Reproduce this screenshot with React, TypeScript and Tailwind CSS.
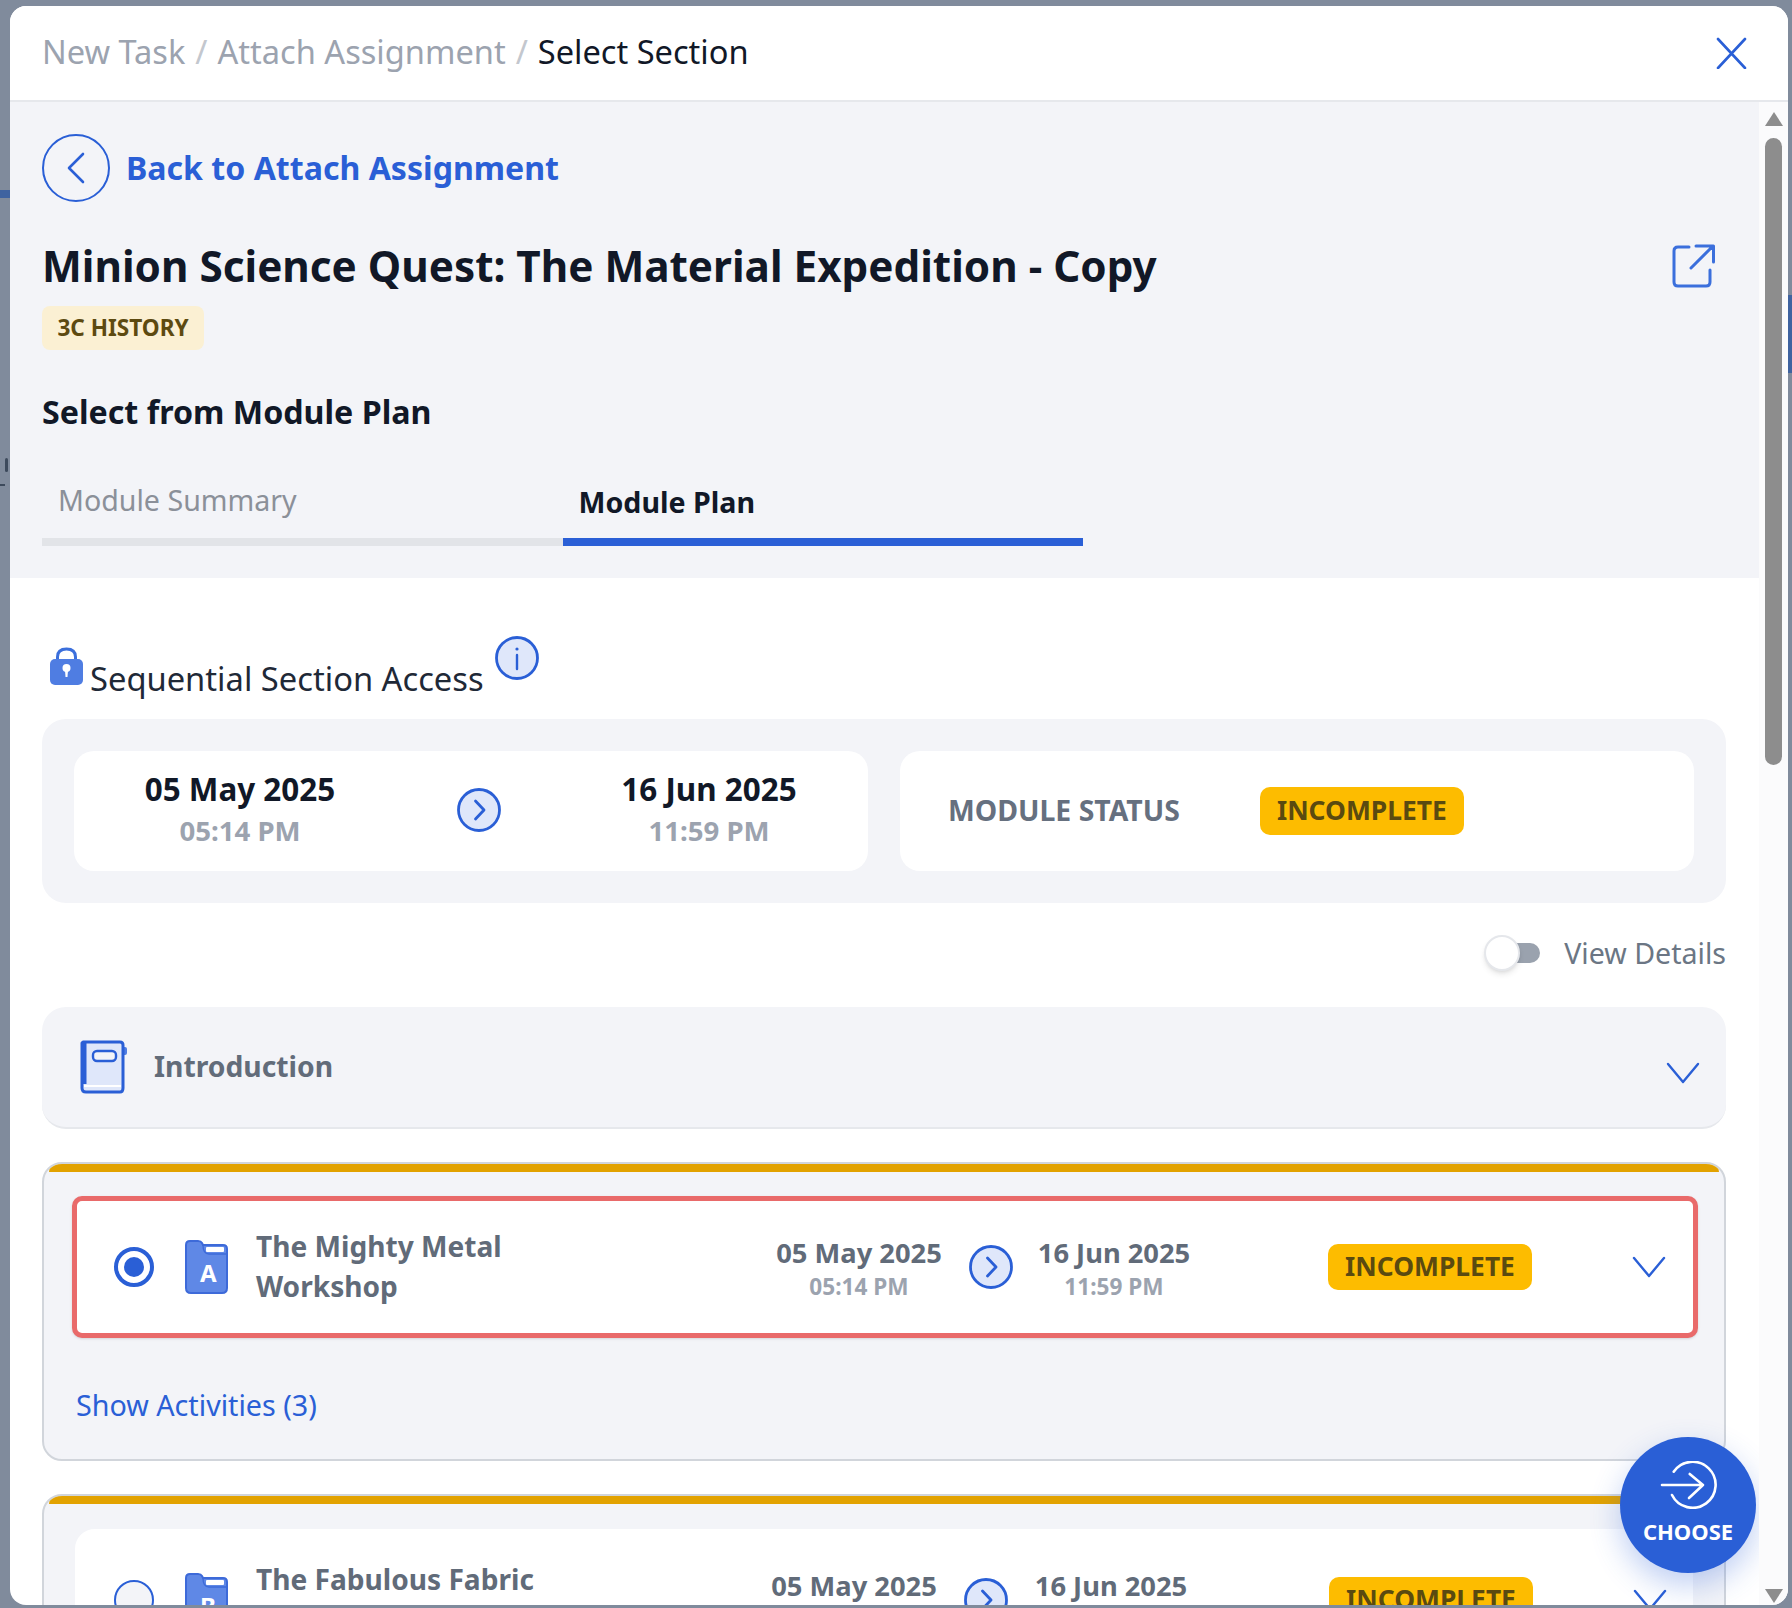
import React from "react";

function Chevron() {
  return (
    <svg width="34" height="22" viewBox="0 0 34 22" fill="none" stroke="#2a5fd6" strokeWidth="2.4" strokeLinecap="round" strokeLinejoin="round">
      <path d="M2 2 L17 20 L32 2" />
    </svg>
  );
}

function ArrowCircle() {
  return (
    <svg width="44" height="44" viewBox="0 0 44 44" fill="none" className="shrink-0">
      <circle cx="22" cy="22" r="20.5" fill="#dfe7fa" stroke="#2a5fd6" strokeWidth="2.8" />
      <path d="M18.5 13 L27 22 L18.5 31" stroke="#2a5fd6" strokeWidth="2.8" strokeLinecap="round" strokeLinejoin="round" />
    </svg>
  );
}

function FolderIcon({ letter }: { letter: string }) {
  return (
    <div className="relative h-[54px] w-[43px] shrink-0">
      <svg width="43" height="54" viewBox="0 0 43 54" fill="none" className="absolute inset-0">
        <path
          d="M1 5 Q1 1 5 1 H13 Q16 1 17 3 L18 5 H38 Q42 5 42 9 V48 Q42 53 37 53 H6 Q1 53 1 48 Z"
          fill="#5f88e6"
          stroke="#3d6ad9"
          strokeWidth="2"
        />
        <rect x="21" y="7" width="18" height="5" rx="1" fill="#ffffff" />
        <path d="M18 5 Q18 14 24 14 H41" fill="none" stroke="#3d6ad9" strokeWidth="1.4" />
      </svg>
      <span className="absolute left-[15px] top-[19px] text-[24px] leading-[28px] font-bold text-white">{letter}</span>
    </div>
  );
}

function Status() {
  return (
    <div className="flex h-[46px] w-[204px] shrink-0 items-center justify-center rounded-[10px] bg-[#fdbc00] pb-[1px] text-[26.4px] font-bold text-[#5a4a10]">
      INCOMPLETE
    </div>
  );
}

function Row({
  lines,
  letter,
  selected,
}: {
  lines: string[];
  letter: string;
  selected: boolean;
}) {
  return (
    <div
      className={
        selected
          ? "flex h-[142px] items-center rounded-[10px] border-[5px] border-[#e96a6a] bg-white pl-[37px] shadow-sm"
          : "ml-[3px] mr-[5px] flex h-[142px] items-center rounded-[20px] border-[5px] border-white bg-white pl-[34px]"
      }
    >
      {selected ? (
        <div className="flex h-[40px] w-[40px] shrink-0 items-center justify-center rounded-full border-[4px] border-[#2a5fd6] bg-white">
          <div className="h-[20px] w-[20px] rounded-full bg-[#2a5fd6]" />
        </div>
      ) : (
        <div className="h-[40px] w-[40px] shrink-0 rounded-full border-[2px] border-[#2a5fd6] bg-[#f3f4f8]" />
      )}
      <div className="ml-[31px]">
        <FolderIcon letter={letter} />
      </div>
      <div className="ml-[28px] h-[82px] w-[400px] shrink-0 pb-[2px] text-[28.1px] leading-[40px] font-bold text-[#616b79]">
        {lines.map((t) => (
          <div key={t}>{t}</div>
        ))}
      </div>
      <div className={selected ? "ml-[113px] flex w-[180px] shrink-0 flex-col items-center" : "ml-[108px] flex w-[180px] shrink-0 flex-col items-center"}>
        <div className="text-[27.3px] leading-[39px] font-bold text-[#616b79]">05 May 2025</div>
        <div className="text-[22.6px] leading-[29px] font-bold text-[#9ca3af]">05:14 PM</div>
      </div>
      <div className="ml-[20px]">
        <ArrowCircle />
      </div>
      <div className={selected ? "ml-[14px] flex w-[174px] shrink-0 flex-col items-center" : "ml-[16px] flex w-[174px] shrink-0 flex-col items-center"}>
        <div className="text-[27.3px] leading-[39px] font-bold text-[#616b79]">16 Jun 2025</div>
        <div className="text-[22.6px] leading-[29px] font-bold text-[#9ca3af]">11:59 PM</div>
      </div>
      <div className={selected ? "ml-[127px]" : "ml-[131px]"}>
        <Status />
      </div>
      <div className="ml-[100px]">
        <Chevron />
      </div>
    </div>
  );
}

export default function App() {
  return (
    <div className="relative h-[1608px] w-[1792px] overflow-hidden bg-[#808b9c] pl-[10px] pr-[4px] pt-[6px] pb-[3px] font-['Noto_Sans',sans-serif]">
      {/* Page showing behind the dialog */}
      <div className="absolute left-0 top-[190px] h-[8px] w-[10px] bg-[#3f63a0]" />
      <div className="absolute left-[5px] top-[458px] h-[14px] w-[3px] rounded-full bg-[#3d4a5c]" />
      <div className="absolute left-0 top-[484px] h-[2px] w-[5px] bg-[#3d4a5c]" />
      <div className="absolute right-0 top-[295px] h-[78px] w-[4px] bg-[#3f63a0]" />

      <div className="relative flex h-full flex-col overflow-hidden rounded-[16px] bg-white">
        {/* Header */}
        <div className="flex h-[96px] shrink-0 items-center justify-between border-b-2 border-[#e6e8ec] bg-white pl-[32px] pr-[41px]">
          <div className="pb-[2px] text-[32.6px] leading-[44px] text-[#111827]">
            <span className="text-[#9ca3af]">New Task</span>
            <span className="mx-[10px] text-[#c3c7ce]">/</span>
            <span className="text-[#9ca3af]">Attach Assignment</span>
            <span className="mx-[10px] text-[#c3c7ce]">/</span>
            <span>Select Section</span>
          </div>
          <svg width="32" height="32" viewBox="0 0 32 32" fill="none" stroke="#2a5fd6" strokeWidth="2.6" strokeLinecap="round">
            <path d="M3 2 L30 31 M30 2 L3 31" />
          </svg>
        </div>

        <div className="flex min-h-0 flex-1">
          {/* Main */}
          <div className="relative min-w-0 flex-1 overflow-hidden">
            <div className="h-[476px] bg-[#f3f4f8] pl-[32px] pr-[33px] pt-[32px]">
              <div className="flex items-center">
                <div className="flex h-[68px] w-[68px] items-center justify-center rounded-full border-2 border-[#2a5fd6]">
                  <svg width="20" height="32" viewBox="0 0 20 32" fill="none" stroke="#2a5fd6" strokeWidth="2.6" strokeLinecap="round" strokeLinejoin="round">
                    <path d="M17 2 L3 16 L17 30" />
                  </svg>
                </div>
                <div className="ml-[16px] text-[32.1px] leading-[44px] font-bold text-[#2a5fd6]">Back to Attach Assignment</div>
              </div>
              <div className="mt-[32px] flex items-center justify-between pr-[10px]">
                <div className="text-[42.25px] leading-[64px] font-bold text-[#111827]">Minion Science Quest: The Material Expedition - Copy</div>
                <svg width="44" height="44" viewBox="0 0 44 44" fill="none" stroke="#3b6fdc" strokeWidth="3" strokeLinecap="round" strokeLinejoin="round">
                  <path d="M17 3 H6 Q2 3 2 7 V38 Q2 42 6 42 H34 Q38 42 38 38 V26" />
                  <path d="M19 24 L41 2 M24 2 H41.5 V18" />
                </svg>
              </div>
              <div className="mt-[8px] flex h-[44px] w-[162px] items-center justify-center rounded-[8px] bg-[#fbf0d3] text-[22.6px] font-bold text-[#5d4a10]">
                3C HISTORY
              </div>
              <div className="mt-[40px] text-[32.2px] leading-[44px] font-bold text-[#111827]">Select from Module Plan</div>
              <div className="mt-[21px] flex w-[1041px]">
                <div className="flex h-[91px] flex-1 flex-col justify-between">
                  <div className="pl-[16px] pt-[25px] text-[28.6px] leading-[40px] text-[#8b9099]">Module Summary</div>
                  <div className="h-[8px] bg-[#e2e4e8]" />
                </div>
                <div className="flex h-[91px] flex-1 flex-col justify-between">
                  <div className="pl-[16px] pt-[27px] text-[28.6px] leading-[40px] font-bold text-[#111827]">Module Plan</div>
                  <div className="h-[8px] bg-[#2a5fd6]" />
                </div>
              </div>
            </div>

            <div className="pl-[32px] pr-[33px]">
              {/* Sequential */}
              <div className="flex h-[141px] items-end pb-[18px]">
                <div className="flex w-full items-end">
                  <svg width="35" height="38" viewBox="0 0 35 38" fill="none" className="mb-[16px] ml-[7px] shrink-0">
                    <path d="M8.5 14 V10 Q8.5 2 17.5 2 Q26.5 2 26.5 10 V14" stroke="#3b6fdc" strokeWidth="3" />
                    <rect x="1" y="12" width="33" height="26" rx="5" fill="#4f7de2" />
                    <circle cx="17.5" cy="21" r="4" fill="#fff" />
                    <path d="M16 23 H19 L18.5 30 H16.5 Z" fill="#fff" />
                  </svg>
                  <div className="ml-[6px] text-[32.7px] leading-[44px] text-[#1f2937]">Sequential Section Access</div>
                  <svg width="44" height="44" viewBox="0 0 44 44" fill="none" className="mb-[21px] ml-[11px] shrink-0">
                    <circle cx="22" cy="22" r="20.5" fill="#dfe7fa" stroke="#2a5fd6" strokeWidth="2.8" />
                    <path d="M22 19 V33" stroke="#2a5fd6" strokeWidth="2.4" strokeLinecap="round" />
                    <circle cx="22" cy="13" r="1.6" fill="#2a5fd6" />
                  </svg>
                </div>
              </div>

              {/* Summary */}
              <div className="grid h-[184px] grid-cols-2 gap-[32px] rounded-[24px] bg-[#f3f4f8] p-[32px]">
                <div className="grid h-[120px] grid-cols-[332px_146px_1fr] items-center rounded-[20px] bg-white">
                  <div className="flex flex-col items-center pb-[8px]">
                    <div className="text-[31.4px] leading-[45px] font-bold text-[#111827]">05 May 2025</div>
                    <div className="text-[27.6px] leading-[38px] font-bold text-[#9ca3af]">05:14 PM</div>
                  </div>
                  <div className="flex justify-center pb-[2px]">
                    <ArrowCircle />
                  </div>
                  <div className="flex flex-col items-center pb-[8px] pr-[2px]">
                    <div className="text-[31.4px] leading-[45px] font-bold text-[#111827]">16 Jun 2025</div>
                    <div className="text-[27.6px] leading-[38px] font-bold text-[#9ca3af]">11:59 PM</div>
                  </div>
                </div>
                <div className="flex h-[120px] items-center rounded-[20px] bg-white pl-[48px]">
                  <div className="pb-[2px] text-[28.4px] font-bold text-[#66707f]">MODULE STATUS</div>
                  <div className="ml-[80px] flex h-[48px] w-[204px] items-center justify-center rounded-[10px] bg-[#fdbc00] text-[26.4px] font-bold text-[#5a4a10]">
                    INCOMPLETE
                  </div>
                </div>
              </div>

              {/* View details */}
              <div className="flex h-[104px] items-center justify-end pb-[4px]">
                <div className="relative h-[36px] w-[56px]">
                  <div className="absolute right-0 top-[8px] h-[20px] w-[36px] rounded-full bg-[#9aa2ae]" />
                  <div className="absolute left-0 top-0 h-[36px] w-[36px] rounded-full border-2 border-[#e5e7eb] bg-white shadow-md" />
                </div>
                <div className="ml-[24px] text-[28.6px] leading-[40px] text-[#6b7684]">View Details</div>
              </div>

              {/* Introduction */}
              <div className="flex h-[122px] items-center rounded-[24px] border-b-2 border-[#e6e8ec] bg-[#f3f4f8] pl-[38px] pr-[26px]">
                <svg width="48" height="54" viewBox="0 0 48 54" fill="none" className="shrink-0">
                  <rect x="42" y="7" width="5" height="8" rx="2" fill="#4f7de2" />
                  <path d="M3 2 H40 Q43 2 43 5 V48 Q43 52 40 52 H6 Q2 52 2 48 V3 Z" fill="#dfe7fa" stroke="#2a5fd6" strokeWidth="3" strokeLinejoin="round" />
                  <path d="M4 46 H41" stroke="#ffffff" strokeWidth="2" />
                  <path d="M4.5 2 V44" stroke="#2a5fd6" strokeWidth="4" />
                  <rect x="13" y="11" width="23" height="10" rx="4" fill="#f3f4f8" stroke="#2a5fd6" strokeWidth="2.4" />
                </svg>
                <div className="ml-[26px] flex-1 pb-[2px] text-[28.3px] leading-[40px] font-bold text-[#626c7a]">Introduction</div>
                <div className="pt-[12px]">
                  <Chevron />
                </div>
              </div>

              {/* Cards */}
              <div className="mt-[33px] h-[299px] overflow-hidden rounded-[20px] border-2 border-[#d1d5db] bg-[#f3f4f8] pl-[28px] pr-[26px]">
                <div className="-ml-[23px] -mr-[21px] h-[8px] rounded-t-[10px] bg-[#e2a200]" />
                <div className="mt-[24px]">
                  <Row lines={["The Mighty Metal", "Workshop"]} letter="A" selected />
                </div>
                <div className="mt-[47px] pl-[4px] text-[28.7px] leading-[40px] text-[#2a5fd6]">Show Activities (3)</div>
              </div>
              <div className="mt-[33px] h-[299px] overflow-hidden rounded-[20px] border-2 border-[#d1d5db] bg-[#f3f4f8] pl-[28px] pr-[26px]">
                <div className="-ml-[23px] -mr-[21px] h-[8px] rounded-t-[10px] bg-[#e2a200]" />
                <div className="mt-[25px]">
                  <Row lines={["The Fabulous Fabric"]} letter="B" selected={false} />
                </div>
              </div>
            </div>

            {/* Floating choose button */}
            <div className="absolute left-[1610px] top-[1335px] flex h-[136px] w-[136px] flex-col items-center rounded-full bg-[#2a5fd6] pt-[24px] shadow-[0_12px_30px_rgba(42,95,214,0.3)]">
              <svg width="60" height="48" viewBox="0 0 60 48" fill="none" stroke="#fff" strokeWidth="2.6" strokeLinecap="round" strokeLinejoin="round">
                <path d="M15.7 10.7 A 23 23 0 1 1 14 34" />
                <path d="M4 24 H45 M31.7 13 L45 24 L31 37" />
              </svg>
              <div className="mt-[8px] text-[22px] leading-[28px] font-bold text-white">CHOOSE</div>
            </div>
          </div>

          {/* Scrollbar */}
          <div className="flex w-[29px] shrink-0 flex-col items-center bg-[#fbfbfc] pt-[10px]">
            <div className="h-0 w-0 border-x-[9px] border-b-[14px] border-x-transparent border-b-[#8d8d8d]" />
            <div className="mt-[12px] h-[627px] w-[17px] rounded-full bg-[#8d8d8d]" />
            <div className="mt-auto mb-[2px] h-0 w-0 border-x-[9px] border-t-[14px] border-x-transparent border-t-[#8d8d8d]" />
          </div>
        </div>
      </div>
    </div>
  );
}
